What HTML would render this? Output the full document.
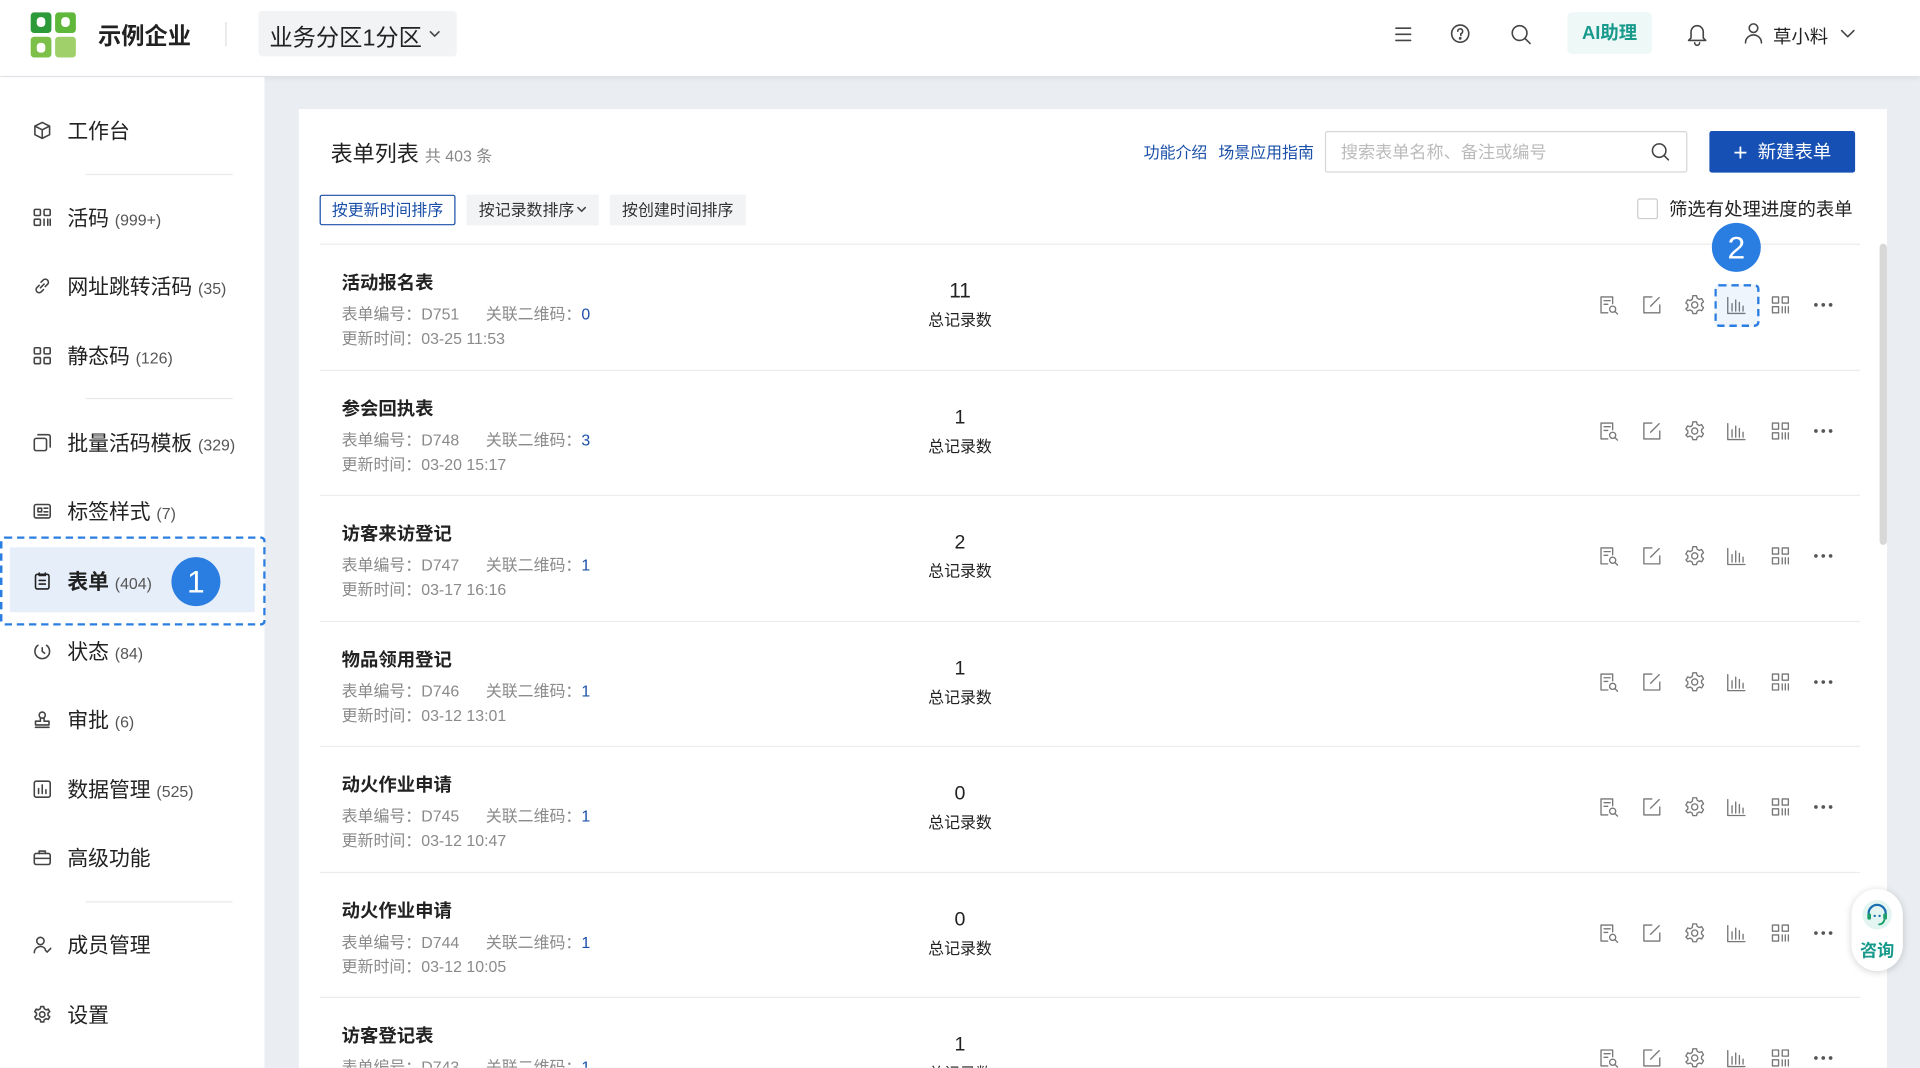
<!DOCTYPE html>
<html><head><meta charset="utf-8"><style>
*{margin:0;padding:0;box-sizing:border-box}
html,body{width:1920px;height:1067px;overflow:hidden;background:#eaedf1}
#s{position:absolute;left:0;top:0;width:1568px;height:872px;transform:scale(1.22449);transform-origin:0 0;font-family:"Liberation Sans","Noto Sans CJK SC",sans-serif;color:#222;background:#eaedf1;overflow:hidden}
.a{position:absolute;white-space:nowrap}
svg{display:block}
.ic{fill:none;stroke:#444;stroke-width:1.3;stroke-linecap:round;stroke-linejoin:round}
.g{color:#8a8a8a;font-size:13px}
.bl{color:#1a4fa8}
.sb{font-size:17px}
.sb span{font-size:13px;color:#555;font-weight:400}
</style></head><body><div id="s">
<div class="a" style="left:0;top:0;width:1568px;height:62px;background:#fff;box-shadow:0 2px 4px rgba(0,0,0,.06)"></div>
<svg class="a" style="left:25px;top:10px" width="37" height="37" viewBox="0 0 37 37"><rect x="0" y="0" width="17" height="17" rx="3" fill="#2d9a3a"/><rect x="20" y="0" width="17" height="17" rx="3" fill="#5fb83a"/><rect x="0" y="20" width="17" height="17" rx="3" fill="#7cc04a"/><rect x="20" y="20" width="17" height="17" rx="3" fill="#9fd06a"/><rect x="5" y="4" width="7" height="8" rx="3" fill="#fff"/><rect x="25" y="4" width="7" height="8" rx="3" fill="#fff"/><rect x="5" y="25" width="7" height="8" rx="3" fill="#fff"/></svg>
<div class="a" style="left:80px;top:15px;font-size:19px;font-weight:600">示例企业</div>
<div class="a" style="left:184px;top:18px;width:1px;height:20px;background:#ddd"></div>
<div class="a" style="left:211px;top:9px;width:162px;height:37px;background:#f2f3f5;border-radius:3px"></div>
<div class="a" style="left:220px;top:16px;font-size:19px">业务分区1分区</div>
<svg class="a ic" style="left:350px;top:24px" width="10" height="8" viewBox="0 0 10 8"><path d="M1.5 2l3.5 3.5 3.5-3.5"/></svg>
<svg class="a ic" style="left:1138px;top:20px" width="16" height="16" viewBox="0 0 16 16"><path d="M2 3h12M2 8h12M2 13h12"/></svg>
<svg class="a ic" style="left:1184px;top:19px" width="17" height="17" viewBox="0 0 17 17"><circle cx="8.5" cy="8.5" r="7"/><path d="M6.5 6.5a2 2 0 1 1 2.5 2v1.5"/><circle cx="8.5" cy="12.3" r=".5"/></svg>
<svg class="a ic" style="left:1233px;top:19px" width="18" height="18" viewBox="0 0 18 18"><circle cx="8" cy="8" r="6"/><path d="M12.5 12.5l4 4"/></svg>
<div class="a" style="left:1280px;top:10px;width:69px;height:34px;background:#eef8f7;border-radius:4px;color:#179a8c;font-size:15px;font-weight:600;text-align:center;line-height:36px">AI助理</div>
<svg class="a ic" style="left:1377px;top:18px" width="18" height="20" viewBox="0 0 18 20"><path d="M4 13V8a5 5 0 0 1 10 0v5l2 2H2z"/><path d="M7 17a2 2 0 0 0 4 0"/></svg>
<svg class="a ic" style="left:1424px;top:18px" width="16" height="18" viewBox="0 0 16 18"><circle cx="8" cy="5" r="3.5"/><path d="M1.5 17a6.5 6.5 0 0 1 13 0"/></svg>
<div class="a" style="left:1448px;top:19px;font-size:15px">草小料</div>
<svg class="a ic" style="left:1503px;top:23px" width="12" height="10" viewBox="0 0 12 10"><path d="M1 2l5 5 5-5"/></svg>
<div class="a" style="left:0;top:63px;width:216px;height:810px;background:#fff"></div>
<div class="a" style="left:70px;top:142px;width:120px;height:1px;background:#e8e8e8"></div>
<div class="a" style="left:70px;top:325px;width:120px;height:1px;background:#e8e8e8"></div>
<div class="a" style="left:70px;top:736px;width:120px;height:1px;background:#e8e8e8"></div>
<div class="a" style="left:8px;top:447px;width:200px;height:53px;background:#e6eef9"></div>
<div class="a" style="left:0;top:438px;width:217px;height:73px;border:2.5px dashed #2a7de1;border-radius:4px"></div>
<div class="a" style="left:140px;top:455px;width:40px;height:40px;border-radius:50%;background:#2a7de1;color:#fff;font-size:26px;text-align:center;line-height:40px">1</div>
<div class="a sb" style="left:55px;top:93px">工作台</div>
<div class="a sb" style="left:55px;top:164px">活码 <span>(999+)</span></div>
<div class="a sb" style="left:55px;top:220px">网址跳转活码 <span>(35)</span></div>
<div class="a sb" style="left:55px;top:277px">静态码 <span>(126)</span></div>
<div class="a sb" style="left:55px;top:348px">批量活码模板 <span>(329)</span></div>
<div class="a sb" style="left:55px;top:404px">标签样式 <span>(7)</span></div>
<div class="a sb" style="left:55px;top:461px;font-weight:700">表单 <span>(404)</span></div>
<div class="a sb" style="left:55px;top:518px">状态 <span>(84)</span></div>
<div class="a sb" style="left:55px;top:574px">审批 <span>(6)</span></div>
<div class="a sb" style="left:55px;top:631px">数据管理 <span>(525)</span></div>
<div class="a sb" style="left:55px;top:687px">高级功能</div>
<div class="a sb" style="left:55px;top:758px">成员管理</div>
<div class="a sb" style="left:55px;top:815px">设置</div>
<svg class="a ic" style="left:27px;top:99px" width="15" height="15" viewBox="0 0 15 15"><path d="M7.5 1l6 3v7l-6 3-6-3V4z M1.5 4l6 3 6-3 M7.5 7v7"/></svg>
<svg class="a ic" style="left:27px;top:170px" width="15" height="15" viewBox="0 0 15 15"><rect x="1" y="1" width="5" height="5" rx="1"/><rect x="9" y="1" width="5" height="5" rx="1"/><rect x="1" y="9" width="5" height="5" rx="1"/><path d="M9 9v5M12 9v5M14 9v5"/></svg>
<svg class="a ic" style="left:27px;top:226px" width="15" height="15" viewBox="0 0 15 15"><path d="M6 9l3-3M5 7L3 9a2.5 2.5 0 0 0 3.5 3.5L8.5 10.5M10 8l2-2A2.5 2.5 0 0 0 8.5 2.5L6.5 4.5"/></svg>
<svg class="a ic" style="left:27px;top:283px" width="15" height="15" viewBox="0 0 15 15"><rect x="1" y="1" width="5" height="5" rx="1"/><rect x="9" y="1" width="5" height="5" rx="1"/><rect x="1" y="9" width="5" height="5" rx="1"/><rect x="9" y="9" width="5" height="5" rx="1"/></svg>
<svg class="a ic" style="left:27px;top:354px" width="15" height="15" viewBox="0 0 15 15"><rect x="1" y="4" width="10" height="10" rx="1.5"/><path d="M4 1h8.5a1.5 1.5 0 0 1 1.5 1.5V11"/></svg>
<svg class="a ic" style="left:27px;top:410px" width="15" height="15" viewBox="0 0 15 15"><rect x="1" y="2" width="13" height="11" rx="1.5"/><path d="M4 5h3v3H4zM9 5h3M9 8h3M4 10.5h8"/></svg>
<svg class="a ic" style="left:27px;top:467px;stroke:#222" width="15" height="15" viewBox="0 0 15 15"><rect x="2" y="2" width="11" height="12" rx="1.5"/><path d="M5 1v2h5V1M5 7h5M5 10h5"/></svg>
<svg class="a ic" style="left:27px;top:524px" width="15" height="15" viewBox="0 0 15 15"><path d="M4 3a6 6 0 1 0 7 0"/><path d="M7.5 5v3l2 1.5"/></svg>
<svg class="a ic" style="left:27px;top:580px" width="15" height="15" viewBox="0 0 15 15"><circle cx="7.5" cy="4" r="2.5"/><path d="M6 6.5v2.5H2v3h11v-3H9V6.5M2 14h11"/></svg>
<svg class="a ic" style="left:27px;top:637px" width="15" height="15" viewBox="0 0 15 15"><rect x="1" y="1" width="13" height="13" rx="1.5"/><path d="M4.5 11V7M7.5 11V4M10.5 11V8"/></svg>
<svg class="a ic" style="left:27px;top:693px" width="15" height="15" viewBox="0 0 15 15"><rect x="1" y="4" width="13" height="9" rx="1.5"/><path d="M5 4V2h5v2M1 8h13"/></svg>
<svg class="a ic" style="left:27px;top:764px" width="15" height="15" viewBox="0 0 15 15"><circle cx="6" cy="4.5" r="3"/><path d="M1 14a5 5 0 0 1 9-3M10 12l1.5 1.5 3-3"/></svg>
<svg class="a ic" style="left:27px;top:821px" width="15" height="15" viewBox="0 0 15 15"><circle cx="7.5" cy="7.5" r="2.2"/><path d="M6.3 1h2.4l.4 1.8 1.5.9 1.8-.6 1.2 2.1-1.4 1.2v1.8l1.4 1.2-1.2 2.1-1.8-.6-1.5.9-.4 1.8H6.3l-.4-1.8-1.5-.9-1.8.6-1.2-2.1 1.4-1.2V6.4L1.4 5.2l1.2-2.1 1.8.6 1.5-.9z"/></svg>
<div class="a" style="left:244px;top:89px;width:1297px;height:800px;background:#fff"></div>
<div class="a" style="left:270px;top:112px;font-size:18px">表单列表 <span style="font-size:13px;color:#888">共 403 条</span></div>
<div class="a bl" style="left:934px;top:114px;font-size:13px">功能介绍</div>
<div class="a bl" style="left:995px;top:114px;font-size:13px">场景应用指南</div>
<div class="a" style="left:1082px;top:107px;width:296px;height:34px;border:1px solid #d6d6d6;border-radius:2px"></div>
<div class="a" style="left:1095px;top:114px;font-size:14px;color:#bbb">搜索表单名称、备注或编号</div>
<svg class="a ic" style="left:1348px;top:116px" width="16" height="16" viewBox="0 0 16 16"><circle cx="7" cy="7" r="5.5"/><path d="M11 11l3.5 3.5"/></svg>
<div class="a" style="left:1396px;top:107px;width:119px;height:34px;background:#1650b5;border-radius:2px;color:#fff;font-size:15px;text-align:center;line-height:36px"><span style="font-size:20px;vertical-align:-2px">+</span>&nbsp; 新建表单</div>
<div class="a" style="left:261px;top:159px;width:111px;height:25px;border:1px solid #1a4fa8;border-radius:2px;color:#1a4fa8;font-size:13px;text-align:center;line-height:23px">按更新时间排序</div>
<div class="a" style="left:381px;top:159px;width:108px;height:25px;background:#f2f3f5;font-size:13px;line-height:25px;color:#333;padding-left:10px">按记录数排序</div>
<svg class="a ic" style="left:471px;top:168px" width="8" height="6" viewBox="0 0 8 6"><path d="M1 1.5l3 3 3-3"/></svg>
<div class="a" style="left:498px;top:159px;width:111px;height:25px;background:#f2f3f5;font-size:13px;text-align:center;line-height:25px;color:#333">按创建时间排序</div>
<div class="a" style="left:1337px;top:162px;width:17px;height:17px;border:1px solid #ccc;border-radius:2px"></div>
<div class="a" style="left:1363px;top:160px;font-size:15px">筛选有处理进度的表单</div>
<div class="a" style="left:1535px;top:199px;width:6px;height:246px;background:#d8d8d8;border-radius:3px"></div>
<div id="rows"></div>
<div class="a" style="left:1398px;top:182px;width:40px;height:40px;border-radius:50%;background:#2a7de1;color:#fff;font-size:26px;text-align:center;line-height:40px">2</div>
<div class="a" style="left:1400px;top:232px;width:37px;height:35px;border:2.5px dashed #2a7de1;border-radius:4px;background:rgba(42,125,225,.08)"></div>
<div class="a" style="left:1512px;top:726px;width:42px;height:67px;background:#fff;border-radius:21px;box-shadow:0 1px 6px rgba(0,0,0,.18)"></div>
<svg class="a" style="left:1520px;top:734px" width="26" height="26" viewBox="0 0 26 26"><circle cx="13" cy="13" r="12" fill="#e3f5f1"/><path d="M6 15v-3a7 7 0 0 1 14 0v3" fill="none" stroke="#1a6fb0" stroke-width="1.8"/><rect x="5" y="12" width="3" height="5" rx="1" fill="#1a9e6a"/><rect x="18" y="12" width="3" height="5" rx="1" fill="#1a9e6a"/><path d="M19 17q-1 4-5 4" fill="none" stroke="#1a9e6a" stroke-width="1.5"/><circle cx="11" cy="14" r="1" fill="#1a6fb0"/><circle cx="15" cy="14" r="1" fill="#1a6fb0"/></svg>
<div class="a" style="left:1519px;top:766px;font-size:14px;color:#179a8c;font-weight:600">咨询</div>
</div>
<script>
var d=[["活动报名表","D751","0","03-25 11:53","11"],["参会回执表","D748","3","03-20 15:17","1"],["访客来访登记","D747","1","03-17 16:16","2"],["物品领用登记","D746","1","03-12 13:01","1"],["动火作业申请","D745","1","03-12 10:47","0"],["动火作业申请","D744","1","03-12 10:05","0"],["访客登记表","D743","1","03-12 09:40","1"]];
var icons=['<path d="M12 8V2.5H2.5v13H8"/><path d="M5 5.5h5M5 8.5h3"/><circle cx="12" cy="12.5" r="2.5"/><path d="M14 14.5l2 2"/>','<path d="M9 2.5H2.5v13h13V9"/><path d="M8 10l7-7"/>','<circle cx="9" cy="9" r="2.5"/><path d="M7.5 1.5h3l.5 2 1.7 1 2-.7 1.5 2.6-1.6 1.4v2l1.6 1.4-1.5 2.6-2-.7-1.7 1-.5 2h-3l-.5-2-1.7-1-2 .7L1.8 12.2l1.6-1.4v-2L1.8 7.4 3.3 4.8l2 .7 1.7-1z"/>','<path d="M2 3v13h14M5.5 14V8M8.5 14V5M11.5 14V7M14.5 14V10"/>','<rect x="2.5" y="2.5" width="5" height="5"/><rect x="10.5" y="2.5" width="5" height="5"/><rect x="2.5" y="10.5" width="5" height="5"/><path d="M10.5 10.5v5M13 10.5v5M15.5 10.5v5"/>'];
var xs=[1314,1349,1384,1418,1454];var h='';
d.forEach(function(r,i){var t=199+102.5*i;
h+='<div class="a" style="left:261px;top:'+t+'px;width:1258px;height:1px;background:#ececec"></div>';
h+='<div class="a" style="left:279px;top:'+(t+21)+'px;font-size:15px;font-weight:700">'+r[0]+'</div>';
h+='<div class="a g" style="left:279px;top:'+(t+47)+'px">表单编号：'+r[1]+'&nbsp;&nbsp;&nbsp;&nbsp;&nbsp; 关联二维码：<span class="bl">'+r[2]+'</span></div>';
h+='<div class="a g" style="left:279px;top:'+(t+67)+'px">更新时间：'+r[3]+'</div>';
h+='<div class="a" style="left:734px;width:100px;text-align:center;top:'+(t+(i==0?29:31))+'px;font-size:'+(i==0?17:16)+'px">'+r[4]+'</div>';
h+='<div class="a" style="left:734px;width:100px;text-align:center;top:'+(t+52)+'px;font-size:13px">总记录数</div>';
xs.forEach(function(x,k){h+='<svg class="a ic" style="left:'+(x-9)+'px;top:'+(t+41)+'px;stroke:#777;stroke-width:1.1" width="18" height="18" viewBox="0 0 18 18">'+icons[k]+'</svg>';});
h+='<svg class="a" style="left:1481px;top:'+(t+48)+'px" width="16" height="4" viewBox="0 0 16 4"><circle cx="2" cy="2" r="1.5" fill="#555"/><circle cx="8" cy="2" r="1.5" fill="#555"/><circle cx="14" cy="2" r="1.5" fill="#555"/></svg>';});
document.getElementById('rows').outerHTML=h;
</script>
</body></html>
